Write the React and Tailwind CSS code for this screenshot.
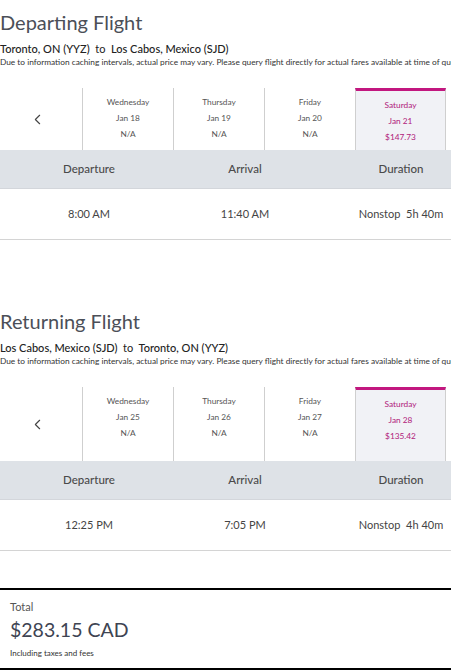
import React from 'react';
import { ChevronLeft } from 'lucide-react';

const font = { fontFamily: 'Lato, "Open Sans", sans-serif' };

function DateTabs({ days, height }) {
    return (
        <div className="flex w-[479px]" style={{ height }}>
            <div className="w-[82px] shrink-0 flex items-center pl-[29px]">
                <ChevronLeft size={17} strokeWidth={1.6} className="text-[#444]" />
            </div>
            {days.map((d) => (
                <div
                    key={d.date}
                    className={
                        d.selected
                            ? 'w-[91px] shrink-0 border-l border-r border-[#cfcfcf] border-t-[3px] border-t-[#c2177f] bg-[#f1f2f6] pt-[6px] text-center text-[8.3px] leading-[16px] text-[#b0197a]'
                            : 'w-[91px] shrink-0 border-l border-[#cfcfcf] pt-[6px] text-center text-[8.3px] leading-[16px] text-[#555]'
                    }
                >
                    <div>{d.day}</div>
                    <div>{d.date}</div>
                    <div>{d.price}</div>
                </div>
            ))}
        </div>
    );
}

function FlightSection({ title, from, to, days, tabHeight, dep, arr, dur }) {
    return (
        <section>
            <h2 className="text-[20px] leading-[24px] text-[#4b4f58]">{title}</h2>
            <p className="mt-[8px] text-[11px] leading-[13px] font-medium text-[#222] whitespace-nowrap">
                {from} <span className="font-normal">&nbsp;to&nbsp;</span> {to}
            </p>
            <div className="mt-[2px] w-[451px] overflow-hidden">
                <p className="text-[8.3px] leading-[10px] text-[#333] whitespace-nowrap">
                    Due to information caching intervals, actual price may vary. Please query flight directly for actual fares available at time of query.
                </p>
            </div>
            <div className="mt-[21px]">
                <DateTabs days={days} height={tabHeight} />
            </div>
            <div className="grid grid-cols-[156px_156px_156px] pl-[11px] h-[39px] items-center bg-[#dee2e7] border-b border-[#d3d6db] text-[11.5px] font-medium text-[#4a4a4a] text-center">
                <div>Departure</div>
                <div>Arrival</div>
                <div>Duration</div>
            </div>
            <div className="grid grid-cols-[156px_156px_156px] pl-[11px] h-[51px] items-center border-b border-[#d4d4d4] text-[11px] text-[#444] text-center">
                <div>{dep}</div>
                <div>{arr}</div>
                <div>
                    Nonstop&nbsp;&nbsp;{dur}
                </div>
            </div>
        </section>
    );
}

export default function App() {
    return (
        <div className="w-[451px] h-[671px] overflow-hidden bg-white" style={font}>
            <div className="pt-[10px]">
                <FlightSection
                    title="Departing Flight"
                    from="Toronto, ON (YYZ)"
                    to="Los Cabos, Mexico (SJD)"
                    tabHeight={62}
                    days={[
                        { day: 'Wednesday', date: 'Jan 18', price: 'N/A' },
                        { day: 'Thursday', date: 'Jan 19', price: 'N/A' },
                        { day: 'Friday', date: 'Jan 20', price: 'N/A' },
                        { day: 'Saturday', date: 'Jan 21', price: '$147.73', selected: true },
                    ]}
                    dep="8:00 AM"
                    arr="11:40 AM"
                    dur="5h 40m"
                />
            </div>
            <div className="mt-[69px]">
                <FlightSection
                    title="Returning Flight"
                    from="Los Cabos, Mexico (SJD)"
                    to="Toronto, ON (YYZ)"
                    tabHeight={74}
                    days={[
                        { day: 'Wednesday', date: 'Jan 25', price: 'N/A' },
                        { day: 'Thursday', date: 'Jan 26', price: 'N/A' },
                        { day: 'Friday', date: 'Jan 27', price: 'N/A' },
                        { day: 'Saturday', date: 'Jan 28', price: '$135.42', selected: true },
                    ]}
                    dep="12:25 PM"
                    arr="7:05 PM"
                    dur="4h 40m"
                />
            </div>
            <div className="mt-[37px] border-t-2 border-b-2 border-black px-[10px] pt-[10px] pb-[10px]">
                <div className="text-[11px] leading-[14px] text-[#555]">Total</div>
                <div className="mt-[4px] text-[19.5px] leading-[24px] text-[#3e4452]">$283.15 CAD</div>
                <div className="mt-[6px] text-[8px] leading-[10px] text-[#333]">Including taxes and fees</div>
            </div>
        </div>
    );
}
